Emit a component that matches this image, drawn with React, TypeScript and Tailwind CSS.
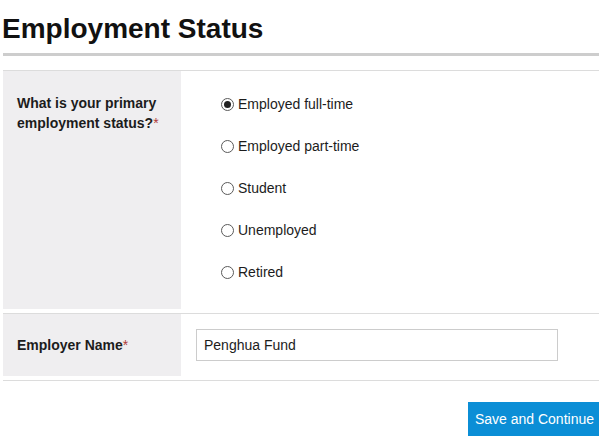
import React from "react";

const options = [
  { label: "Employed full-time", checked: true },
  { label: "Employed part-time", checked: false },
  { label: "Student", checked: false },
  { label: "Unemployed", checked: false },
  { label: "Retired", checked: false },
];

function Radio({ checked }: { checked: boolean }) {
  return (
    <span className="flex h-[13px] w-[13px] items-center justify-center rounded-full border border-[#5a5a5a] bg-white">
      {checked && <span className="h-[7px] w-[7px] rounded-full bg-[#222]" />}
    </span>
  );
}

export default function App() {
  return (
    <div className="h-[438px] w-[599px] overflow-hidden bg-white" style={{ fontFamily: '"Liberation Sans", Arial, sans-serif' }}>
      <div className="w-[601px] pl-[3px]">
        <h1 className="-ml-[1px] mt-[13px] h-[32px] text-[28px] font-bold leading-[32px] text-[#111]">
          Employment Status
        </h1>
        <div className="mt-[8px] h-[3px] bg-[#cdcdcd]" />
        <div className="mt-[14px] h-px bg-[#dcdcdc]" />

        <div className="flex h-[238px]">
          <div className="w-[178px] bg-[#efeef0] pl-[14px] pt-[22px] text-[14px] font-bold leading-[20px] text-[#1c1c1c]">
            What is your primary
            <br />
            employment status?<span className="font-normal text-[#b03a3a]">*</span>
          </div>
          <div className="flex flex-col pl-[40px] pt-[12px]">
            {options.map((o) => (
              <label key={o.label} className="flex h-[42px] items-center gap-[4px] text-[14px] text-[#1c1c1c]">
                <Radio checked={o.checked} />
                <span>{o.label}</span>
              </label>
            ))}
          </div>
        </div>
        <div className="mt-[4px] h-px bg-[#dcdcdc]" />

        <div className="flex h-[62px]">
          <div className="flex w-[178px] items-center bg-[#efeef0] pl-[14px] text-[14px] font-bold text-[#1c1c1c]">
            Employer Name<span className="font-normal text-[#b03a3a]">*</span>
          </div>
          <div className="flex items-center pl-[15px]">
            <div className="flex h-[32px] w-[362px] items-center border border-[#cccccc] bg-white pl-[7px] text-[14px] text-[#1c1c1c]">
              Penghua Fund
            </div>
          </div>
        </div>
        <div className="mt-[4px] h-px bg-[#dcdcdc]" />

        <div className="mt-[21px] flex justify-end">
          <button className="h-[34px] bg-[#0b8ed6] px-[7px] text-[14px] text-white">
            Save and Continue
          </button>
        </div>
      </div>
    </div>
  );
}
